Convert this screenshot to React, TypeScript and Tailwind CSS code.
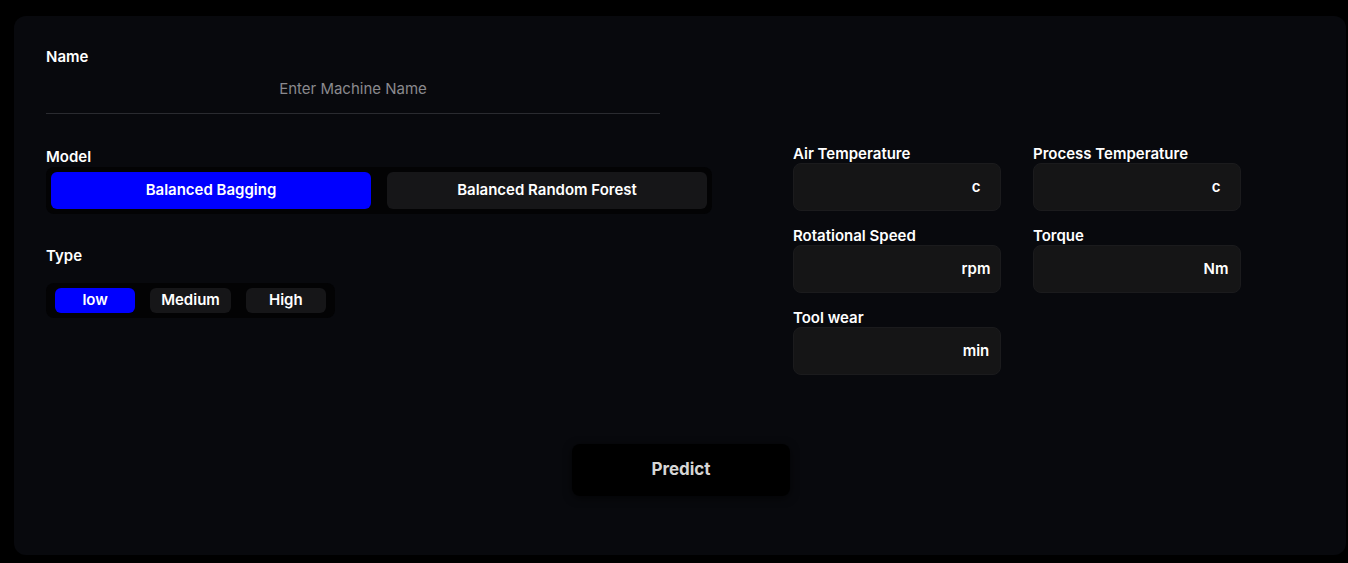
import { useState } from 'react'

const models = ['Balanced Bagging', 'Balanced Random Forest']
const types = ['low', 'Medium', 'High']

const fields = [
  { label: 'Air Temperature', unit: 'c' },
  { label: 'Process Temperature', unit: 'c' },
  { label: 'Rotational Speed', unit: 'rpm' },
  { label: 'Torque', unit: 'Nm' },
  { label: 'Tool wear', unit: 'min' },
]

export default function App() {
  const [model, setModel] = useState(models[0])
  const [type, setType] = useState(types[0])

  return (
    <div
      className="min-h-[563px] bg-black pl-[14px] pr-[2px] pt-[16px] pb-[8px] text-white"
      style={{ fontFamily: 'Inter, "Noto Sans", sans-serif' }}
    >
      <div className="flex h-[539px] flex-col rounded-xl bg-[#08090d] pl-[32px] pt-[33px]">
        <div className="flex">
          {/* Left column */}
          <div className="w-[666px]">
            <label className="block text-[15px] font-semibold leading-[16px]">Name</label>
            <input
              type="text"
              placeholder="Enter Machine Name"
              className="mt-[7px] h-[42px] w-[614px] border-b border-[#2a2b30] bg-transparent pb-[8px] text-center text-[15px] text-white outline-none placeholder:text-[#8a8a8e]"
            />

            <label className="mt-[35px] block text-[15px] font-semibold leading-[16px]">Model</label>
            <div className="mt-[2px] flex h-[47px] w-[666px] gap-[16px] rounded-lg bg-[#030304] p-[5px]">
              {models.map((m) => (
                <button
                  key={m}
                  type="button"
                  onClick={() => setModel(m)}
                  className={`flex-1 rounded-md text-[15px] font-semibold ${
                    model === m ? 'bg-[#0000ff]' : 'bg-[#161618]'
                  }`}
                >
                  {m}
                </button>
              ))}
            </div>

            <label className="mt-[34px] block text-[15px] font-semibold leading-[16px]">Type</label>
            <div className="mt-[19px] flex h-[35px] w-[289px] gap-[15px] rounded-lg bg-[#030304] px-[9px] py-[5px]">
              {types.map((t) => (
                <button
                  key={t}
                  type="button"
                  onClick={() => setType(t)}
                  className={`w-[81px] rounded-md text-[15px] font-semibold ${
                    type === t ? 'bg-[#0000ff]' : 'bg-[#161618]'
                  }`}
                >
                  {t}
                </button>
              ))}
            </div>
          </div>

          {/* Right column */}
          <div className="ml-[81px] mt-[97px] grid w-[448px] grid-cols-[208px_208px] gap-x-[32px] gap-y-[17px]">
            {fields.map((f) => (
              <div key={f.label}>
                <label className="block text-[15px] font-semibold leading-[16px]">{f.label}</label>
                <div className="mt-[1px] flex h-[48px] items-center rounded-lg border border-[#1b1b1d] bg-[#151516] pr-[4px]">
                  <input type="text" className="h-full min-w-0 flex-1 bg-transparent pl-3 text-[15px] outline-none" />
                  <span className="w-[40px] text-center text-[15px] font-semibold">{f.unit}</span>
                </div>
              </div>
            ))}
          </div>
        </div>

        <div className="mt-[69px] flex justify-center pr-[30px]">
          <button
            type="button"
            className="h-[52px] w-[218px] rounded-lg bg-black text-[17px] font-bold text-[#d6d6d6] shadow-[0_2px_8px_rgba(0,0,0,0.6)]"
          >
            Predict
          </button>
        </div>
      </div>
    </div>
  )
}
